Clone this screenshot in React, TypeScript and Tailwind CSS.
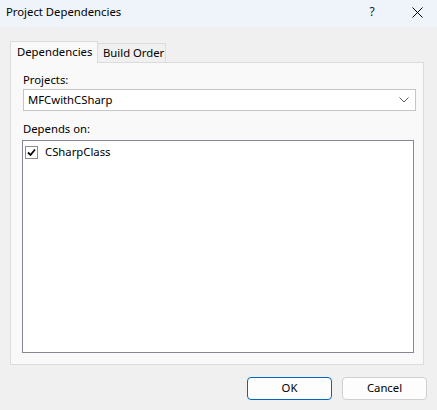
import React from "react";

export default function App() {
  const font = { fontFamily: '"Segoe UI", "Noto Sans", sans-serif' };
  return (
    <div
      className="w-[437px] h-[410px] bg-[#f0f0f0] flex flex-col text-[11.3px] text-black overflow-hidden whitespace-nowrap"
      style={font}
    >
      {/* Title bar */}
      <div className="h-[27px] bg-[#eef4f9] flex items-center shrink-0 pb-[3px]">
        <div className="pl-[6px] flex-1 leading-none">Project Dependencies</div>
        <div className="w-[50px] h-full flex items-center justify-center text-[12px] text-[#222]">?</div>
        <div className="w-[40px] h-full flex items-center justify-center">
          <svg width="11" height="11" viewBox="0 0 11 11">
            <path d="M0.5 0.5 L10.5 10.5 M10.5 0.5 L0.5 10.5" stroke="#000" strokeWidth="1" />
          </svg>
        </div>
      </div>

      {/* Body */}
      <div className="flex flex-col pt-[14px] pl-[10px] pr-[13px]">
        {/* Tabs */}
        <div className="flex items-end h-[21px] relative z-10">
          <div className="h-[22px] w-[88px] bg-[#f9f9f9] border border-b-0 border-[#dcdcdc] flex items-center pl-[6px] -mb-[1px]">
            Dependencies
          </div>
          <div className="h-[19px] w-[68px] bg-[#f0f0f0] border border-l-0 border-b-0 border-[#dcdcdc] flex items-center pl-[5px]">
            Build Order
          </div>
        </div>
        {/* Panel */}
        <div className="h-[303px] bg-[#f9f9f9] border border-[#dcdcdc] flex flex-col">
          <div className="pl-[12px] pt-[9px] h-[26px] leading-[16px]">Projects:</div>
          <div className="ml-[12px] mr-[7px] h-[22px] bg-white border border-[#c6c6c6] flex items-center pl-[4px] pr-[6px]">
            <span className="flex-1">MFCwithCSharp</span>
            <svg width="10" height="6" viewBox="0 0 10 6">
              <path d="M0.5 0.5 L5 5 L9.5 0.5" stroke="#5a5a5a" strokeWidth="1" fill="none" />
            </svg>
          </div>
          <div className="pl-[12px] pt-[10px] h-[29px] leading-[16px]">Depends on:</div>
          <div className="ml-[11px] mr-[9px] h-[213px] bg-white border border-[#828790] flex flex-col pt-[3px] pl-[2px]">
            <div className="flex items-center h-[16px]">
              <div className="w-[13px] h-[13px] border border-[#8c8c8c] bg-white flex items-center justify-center mr-[7px]">
                <svg width="9" height="9" viewBox="0 0 9 9">
                  <path d="M1 4.5 L3.5 7 L8 1.5" stroke="#000" strokeWidth="1.8" fill="none" />
                </svg>
              </div>
              <span>CSharpClass</span>
            </div>
          </div>
        </div>
        {/* Buttons */}
        <div className="flex justify-end gap-[10px] mt-[12px]">
          <button className="w-[85px] h-[23px] bg-[#fdfdfd] border border-[#0067c0] rounded-[4px] text-[11.3px]" style={font}>
            OK
          </button>
          <button className="w-[85px] h-[23px] bg-[#fdfdfd] border border-[#d0d0d0] rounded-[4px] text-[11.3px] -mr-[3px]" style={font}>
            Cancel
          </button>
        </div>
      </div>
    </div>
  );
}
